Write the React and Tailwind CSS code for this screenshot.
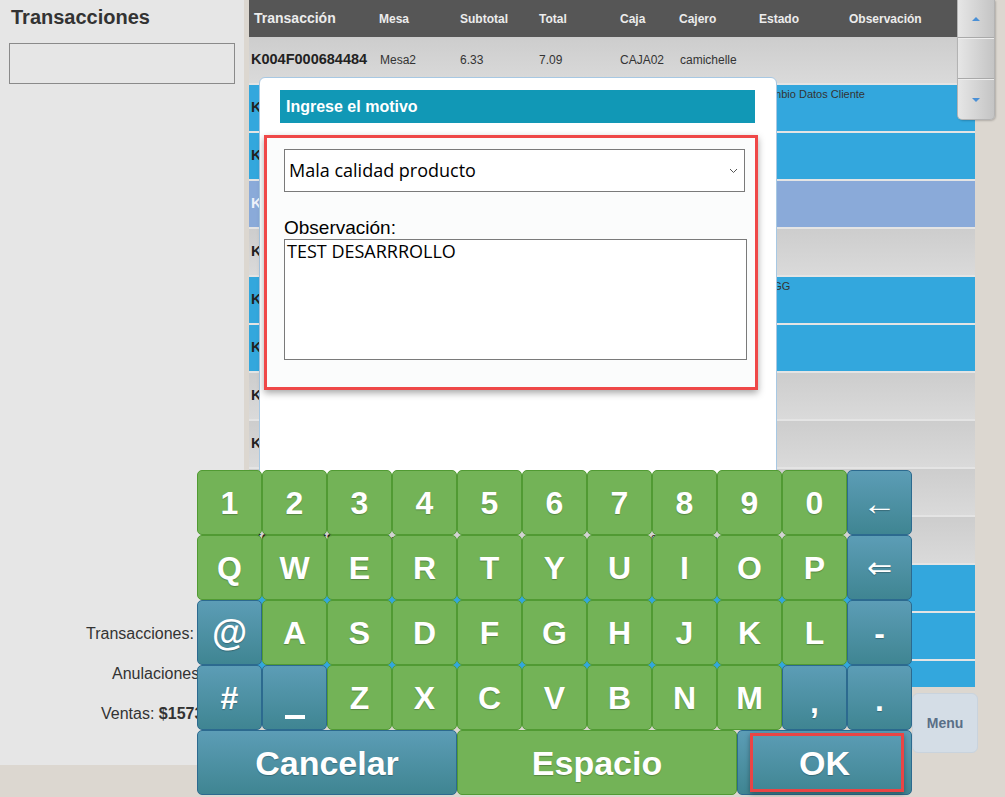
import React from "react";

const rows = [
  { t: "gray", id: "K004F000684484", mesa: "Mesa2", sub: "6.33", tot: "7.09", caja: "CAJA02", cajero: "camichelle" },
  { t: "blue", id: "K004F000684483", mesa: "Mesa1", sub: "4.10", tot: "4.59", caja: "CAJA02", cajero: "camichelle", estado: "Cambio Datos Cliente" },
  { t: "blue", id: "K004F000684482", mesa: "Mesa3", sub: "8.20", tot: "9.18", caja: "CAJA02", cajero: "camichelle" },
  { t: "purple", id: "K004F000684481", mesa: "Mesa4", sub: "3.50", tot: "3.92", caja: "CAJA02", cajero: "camichelle" },
  { t: "gray", id: "K004F000684480", mesa: "Mesa2", sub: "5.00", tot: "5.60", caja: "CAJA02", cajero: "camichelle" },
  { t: "blue", id: "K004F000684479", mesa: "Mesa5", sub: "7.25", tot: "8.12", caja: "CAJA02", cajero: "camichelle", estado: "TGGG" },
  { t: "blue", id: "K004F000684478", mesa: "Mesa1", sub: "2.75", tot: "3.08", caja: "CAJA02", cajero: "camichelle" },
  { t: "gray", id: "K004F000684477", mesa: "Mesa6", sub: "6.00", tot: "6.72", caja: "CAJA02", cajero: "camichelle" },
  { t: "gray", id: "K004F000684476", mesa: "Mesa2", sub: "9.40", tot: "10.53", caja: "CAJA02", cajero: "camichelle" },
  { t: "gray", id: "K004F000684475", mesa: "Mesa3", sub: "1.80", tot: "2.02", caja: "CAJA02", cajero: "camichelle" },
  { t: "gray", id: "K004F000684474", mesa: "Mesa7", sub: "4.45", tot: "4.98", caja: "CAJA02", cajero: "camichelle" },
  { t: "blue", id: "K004F000684473", mesa: "Mesa1", sub: "3.30", tot: "3.70", caja: "CAJA02", cajero: "camichelle" },
  { t: "blue", id: "K004F000684472", mesa: "Mesa8", sub: "5.60", tot: "6.27", caja: "CAJA02", cajero: "camichelle" },
  { t: "blue", id: "K004F000684471", mesa: "Mesa2", sub: "2.20", tot: "2.46", caja: "CAJA02", cajero: "camichelle" },
];

const rowBg = {
  gray: "bg-gradient-to-b from-[#cdcdcd] to-[#dadada]",
  blue: "bg-[#33a7dd]",
  purple: "bg-[#8aaad9]",
};

const GRID = "grid grid-cols-[125px_81px_79px_81px_59px_80px_90px_1fr]";

function Row({ r }) {
  const idColor = r.t === "purple" ? "text-[#eef2fa]" : "text-[#222]";
  return (
    <div className={`${GRID} h-[48px] shrink-0 border-b-2 border-[#e4e4e4] ${rowBg[r.t]} text-[12px] text-[#333]`}>
      <div className={`flex items-center pl-[2px] text-[14.5px] font-bold ${idColor}`}>{r.id}</div>
      <div className="flex items-center pl-[6px]">{r.mesa}</div>
      <div className="flex items-center pl-[5px]">{r.sub}</div>
      <div className="flex items-center pl-[5px]">{r.tot}</div>
      <div className="flex items-center pl-[5px]">{r.caja}</div>
      <div className="flex items-center pl-[6px]">{r.cajero}</div>
      <div className="pl-[4px] pt-[3px] text-[11px] leading-[13px] whitespace-nowrap">{r.estado || ""}</div>
      <div></div>
    </div>
  );
}

function Key({ children, kind = "green", className = "", text = "text-[32px]" }) {
  const base =
    kind === "green"
      ? "bg-[#73b357] border-[#519a33]"
      : "bg-gradient-to-b from-[#5c9db6] to-[#3f8592] border-[#2c6a8f]";
  return (
    <div
      className={`relative flex items-center justify-center rounded-[5px] border-[1.5px] ${base} ${text} font-bold text-white leading-none [text-shadow:0_1px_1px_rgba(0,0,0,0.25)] ${className}`}
    >
      {children}
    </div>
  );
}

export default function App() {
  const row1 = ["1", "2", "3", "4", "5", "6", "7", "8", "9", "0"];
  const row2 = ["Q", "W", "E", "R", "T", "Y", "U", "I", "O", "P"];
  const row3 = ["A", "S", "D", "F", "G", "H", "J", "K", "L"];
  const row4 = ["Z", "X", "C", "V", "B", "N", "M"];

  return (
    <div className="relative w-[1005px] h-[797px] overflow-hidden bg-[#dcd7d0] font-['Liberation_Sans',Arial,sans-serif]">
      <div className="flex h-full">
        {/* Left panel */}
        <aside className="flex h-[765px] w-[244px] shrink-0 flex-col bg-[#e6e6e6]">
          <h1 className="pl-[11px] pt-[5px] text-[20px] font-bold leading-[24px] text-[#333]">Transacciones</h1>
          <div className="mx-[9px] mt-[14px] h-[41px] border border-[#8a8a8a]"></div>
          <div className="mt-auto mb-[31px] flex flex-col text-[16px] text-[#333] whitespace-nowrap">
            <div className="flex h-[40px] items-center pl-[86px]">Transacciones: 38</div>
            <div className="flex h-[40px] items-center pl-[112px]">Anulaciones: 4</div>
            <div className="flex h-[40px] items-center pl-[101px]">
              Ventas:&nbsp;<span className="font-bold">$1573.40</span>
            </div>
          </div>
        </aside>

        {/* Table */}
        <main className="ml-[5px] flex w-[726px] shrink-0 flex-col">
          <div className={`${GRID} h-[37px] shrink-0 bg-[#565656] text-[12px] font-bold text-[#ececec]`}>
            <div className="flex items-center pl-[5px] text-[14px]">Transacción</div>
            <div className="flex items-center pl-[5px]">Mesa</div>
            <div className="flex items-center pl-[5px]">Subtotal</div>
            <div className="flex items-center pl-[5px]">Total</div>
            <div className="flex items-center pl-[5px]">Caja</div>
            <div className="flex items-center pl-[5px]">Cajero</div>
            <div className="flex items-center pl-[5px]">Estado</div>
            <div className="flex items-center pl-[5px]">Observación</div>
          </div>
          <div className="flex h-[650px] shrink-0 flex-col overflow-hidden">
            {rows.map((r, i) => (
              <Row key={i} r={r} />
            ))}
          </div>
          <div className="mt-[6px] flex justify-end">
            <button className="mr-[-3px] flex h-[60px] w-[66px] items-center justify-center rounded-[6px] border border-[#c9d3dd] bg-[#d4dde6] text-[14px] font-bold text-[#5a6f87]">
              Menu
            </button>
          </div>
        </main>
      </div>

      {/* Scroll widget */}
      <div className="absolute left-[957px] top-0 flex h-[120px] w-[38px] flex-col overflow-hidden rounded-b-[5px] border border-t-0 border-[#b3b3b3] bg-gradient-to-r from-[#e6e6e6] to-[#c4c4c4] shadow-[1px_1px_2px_rgba(0,0,0,0.2)]">
        <div className="flex h-[38px] items-center justify-center border-b border-[#a9a9a9]">
          <div className="h-0 w-0 border-x-[4px] border-b-[4px] border-x-transparent border-b-[#4a90d6]"></div>
        </div>
        <div className="h-[41px] border-b border-[#a9a9a9] border-t border-t-[#ededed]"></div>
        <div className="flex flex-1 items-center justify-center border-t border-t-[#ededed]">
          <div className="h-0 w-0 border-x-[4px] border-t-[4px] border-x-transparent border-t-[#4a90d6]"></div>
        </div>
      </div>

      {/* Modal */}
      <div className="absolute left-[259px] top-[77px] h-[430px] w-[518px] rounded-[6px] border border-[#a7c8e3] bg-white">
        <div className="ml-[20px] mt-[12px] flex h-[33px] w-[475px] items-center bg-[#1198b6] pl-[6px] text-[16px] font-bold text-white">
          Ingrese el motivo
        </div>
        <div className="ml-[4px] mt-[12px] h-[255px] w-[494px] border-[3px] border-[#ef4848] bg-[#fbfcfc] pl-[17px] pt-[11px] shadow-[0_3px_7px_rgba(0,0,0,0.35)]">
          <div className="flex h-[43px] w-[461px] items-center justify-between border border-[#7a7a7a] bg-white pl-[4px] pr-[5px] font-['Open_Sans',sans-serif] text-[18px] text-black">
            <span>Mala calidad producto</span>
            <svg width="9" height="6" viewBox="0 0 9 6" className="mr-[1px]">
              <path d="M1 1 L4.5 4.5 L8 1" fill="none" stroke="#555" strokeWidth="1" />
            </svg>
          </div>
          <div className="mt-[26px] text-[19px] leading-[20px] text-black">Observación:</div>
          <div className="mt-[1px] h-[121px] w-[463px] border border-[#7a7a7a] bg-white pl-[2px] font-['Open_Sans',sans-serif] text-[18px] leading-[22px] text-black">
            TEST DESARRROLLO
          </div>
        </div>
      </div>

      {/* Keyboard */}
      <div className="absolute left-[197px] top-[470px] grid grid-cols-[repeat(11,65px)] auto-rows-[65px]">
        {row1.map((k) => (
          <Key key={k}>{k}</Key>
        ))}
        <Key kind="blue" text="text-[34px] font-normal">←</Key>
        {row2.map((k) => (
          <Key key={k}>{k}</Key>
        ))}
        <Key kind="blue" text="text-[30px] font-normal">⇐</Key>
        <Key kind="blue" text="text-[36px]">@</Key>
        {row3.map((k) => (
          <Key key={k}>{k}</Key>
        ))}
        <Key kind="blue">-</Key>
        <Key kind="blue">#</Key>
        <Key kind="blue" className="items-end pb-[10px]">
          <span className="block h-[4px] w-[20px] bg-white"></span>
        </Key>
        {row4.map((k) => (
          <Key key={k}>{k}</Key>
        ))}
        <Key kind="blue" className="pt-[8px]">,</Key>
        <Key kind="blue" className="pt-[4px]">.</Key>
        <Key kind="blue" text="text-[34px]" className="col-span-4">Cancelar</Key>
        <div className="col-span-7 flex">
          <Key text="text-[34px]" className="w-[280px] shrink-0">Espacio</Key>
          <Key kind="blue" text="text-[34px]" className="flex-1">
            OK
            <div className="absolute left-[12px] top-[2px] h-[59px] w-[154px] border-[3px] border-[#e94545] shadow-[0_2px_5px_rgba(0,0,0,0.35)]"></div>
          </Key>
        </div>
      </div>
    </div>
  );
}
